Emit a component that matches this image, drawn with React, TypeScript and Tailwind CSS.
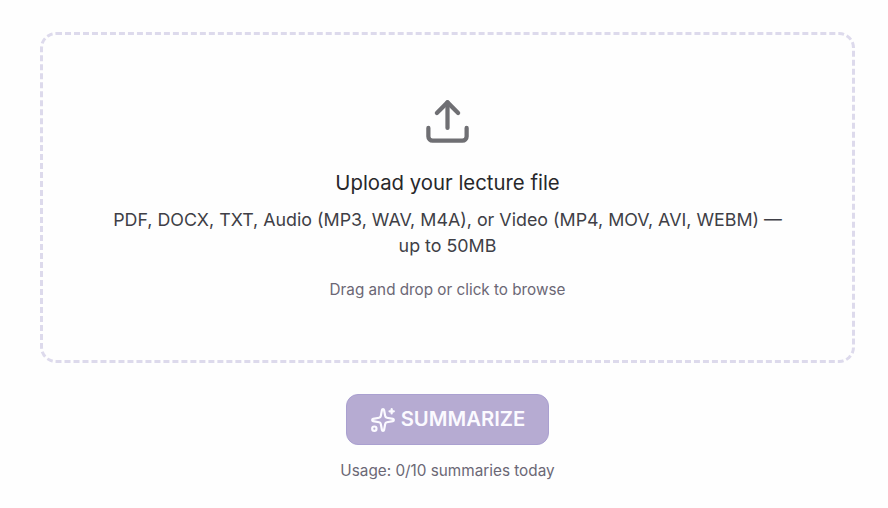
import React from "react";
import { Upload, Sparkles } from "lucide-react";

export default function App() {
  return (
    <div className="min-h-[508px] bg-[#fefefe] px-10 pt-8 font-['Inter',sans-serif]">
      <div className="flex h-[331px] w-[815px] flex-col items-center rounded-2xl border-[3px] border-dashed border-[#dddaec] pt-[61px]">
        <Upload className="h-[51px] w-[51px] text-[#6f6f73]" strokeWidth={2} />
        <h3 className="mt-[22px] text-[20.35px] leading-7 text-[#27272a]">
          Upload your lecture file
        </h3>
        <p className="mt-[10px] w-[690px] text-center text-[17.85px] leading-[26px] text-[#3f3f46]">
          PDF, DOCX, TXT, Audio (MP3, WAV, M4A), or Video (MP4, MOV, AVI, WEBM) — up to 50MB
        </p>
        <p className="mt-[20px] text-[15.25px] leading-[22px] text-[#6b6775]">
          Drag and drop or click to browse
        </p>
      </div>
      <div className="mt-[31px] flex w-[815px] flex-col items-center">
        <button className="flex h-[51px] w-[203px] items-center justify-center gap-[5px] rounded-xl border border-[#aaa0d0] bg-[#b6abd2] text-[20.3px] font-semibold text-[#fbfaff]">
          <Sparkles className="h-[26px] w-[26px]" strokeWidth={2} />
          SUMMARIZE
        </button>
        <p className="mt-[15px] text-[15.3px] leading-[22px] text-[#6b6775]">
          Usage: 0/10 summaries today
        </p>
      </div>
    </div>
  );
}
